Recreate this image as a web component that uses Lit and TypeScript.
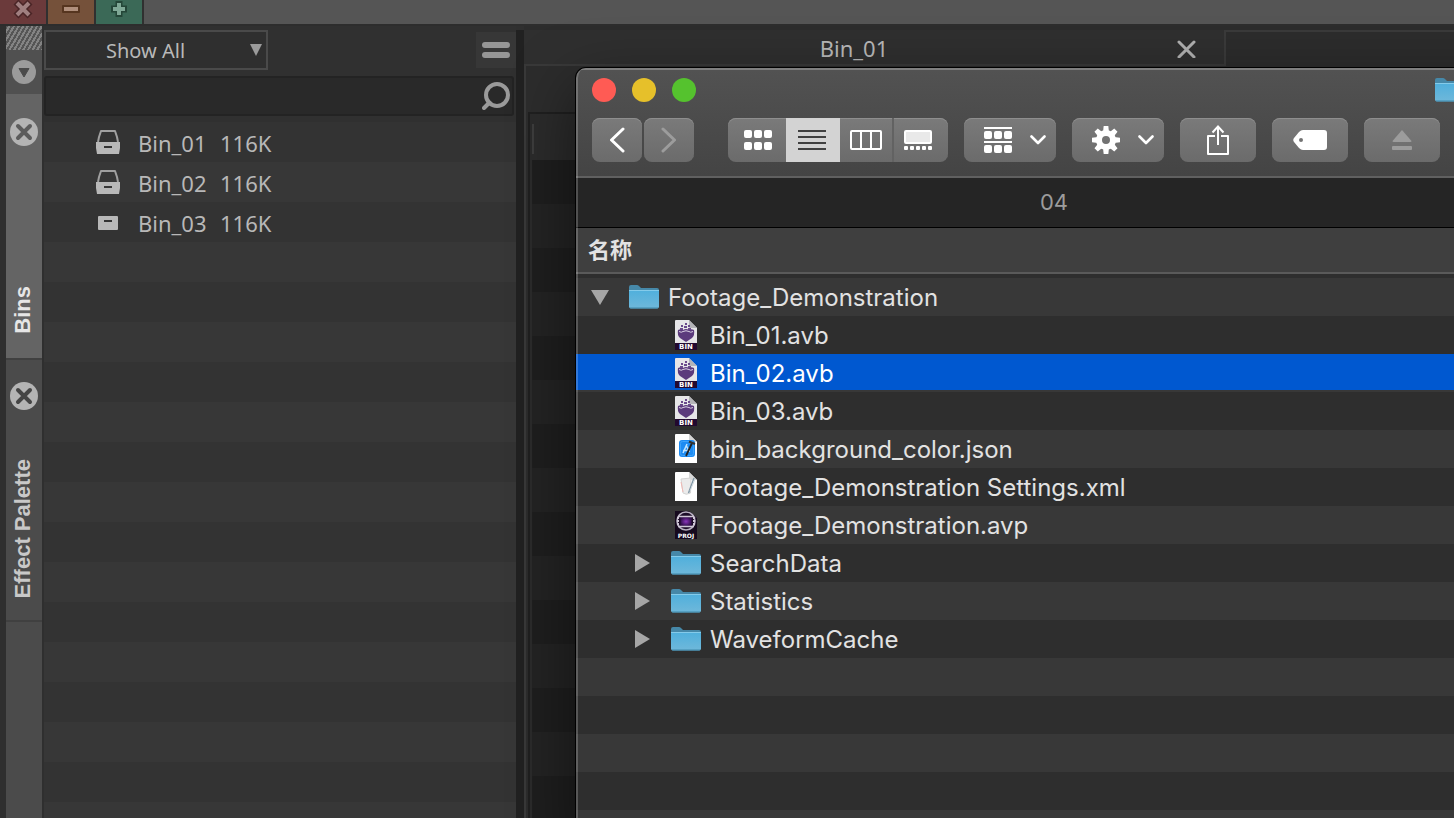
import { LitElement, html, css, svg, nothing } from "lit";
import { customElement, state } from "lit/decorators.js";

const folderIcon = html`<svg class="folder" width="30" height="24" viewBox="0 0 30 24" aria-hidden="true">
  <defs>
    <linearGradient id="fg" x1="0" y1="0" x2="0" y2="1">
      <stop offset="0" stop-color="#4fafdc" />
      <stop offset="1" stop-color="#6fb8da" />
    </linearGradient>
  </defs>
  <path d="M0 2Q0 0 2 0H8Q9 0 10 1L11.500 2.500Q12 3 13 3H28Q30 3 30 5V12H0Z" fill="#4688a8" />
  <path d="M0 5H30V21.500Q30 23.500 28 23.500H2Q0 23.500 0 21.500Z" fill="url(#fg)" />
  <path d="M0 5.500H30" stroke="#84cbea" />
  <path d="M1 23H29" stroke="#3f88aa" />
</svg>`;

const sheet = "M0 1Q0 0 1 0H14L22 8V29H0Z";

const binFileIcon = html`<svg class="file" width="22" height="30" viewBox="0 0 22 30" aria-hidden="true">
  <path d=${sheet} fill="#e6e6e8" />
  <path d="M14 0L22 8H15.500Q14 8 14 6.500Z" fill="#b4b4b8" />
  <path d="M3 10Q6 8.500 8 10Q11 8 14 10Q16 8.500 19 10Q20 15 17 18Q14 20 11 22Q8 20 5 18Q2 15 3 10Z" fill="#5b3a7c" />
  <path d="M4 11.500Q6.500 13 8 11.500Q11 10 14 11.500Q15.500 13 18 11.500" fill="none" stroke="#d9d0e4" stroke-width="1" />
  <g fill="#6a4a8c">
    <rect x="6" y="5" width="2" height="2" /><rect x="10" y="3" width="2" height="2" />
    <rect x="9" y="6" width="3" height="2" /><rect x="13" y="5" width="2" height="2" />
    <rect x="5" y="8" width="3" height="2" /><rect x="13" y="8" width="3" height="2" />
  </g>
  <rect y="23" width="22" height="7" fill="#22092f" />
  <text class="tag" x="11" y="29" text-anchor="middle" font-size="7" fill="#fff">BIN</text>
</svg>`;

const jsonFileIcon = html`<svg class="file" width="22" height="30" viewBox="0 0 22 30" aria-hidden="true">
  <path d=${sheet} fill="#fff" />
  <path d="M14 0L22 8H16Q14 8 14 6Z" fill="#d5d5d5" />
  <rect x="4" y="6" width="16" height="17" rx="3" fill="#1d8bf2" />
  <rect x="5.500" y="7.500" width="13" height="14" rx="2" fill="none" stroke="#3fa3fa" />
  <path d="M8 19L12 10M8 16.500H15M11 11L14.500 18" stroke="#bfe3ff" stroke-width="1.500" fill="none" />
  <path d="M11 22L17 9" stroke="#222" stroke-width="1.800" />
  <path d="M14 7.500L20 10" stroke="#333" stroke-width="2.200" />
</svg>`;

const xmlFileIcon = html`<svg class="file" width="22" height="30" viewBox="0 0 22 30" aria-hidden="true">
  <path d=${sheet} fill="#fff" />
  <path d="M14 0L22 8H16Q14 8 14 6Z" fill="#d8d8d8" />
  <path d="M6 7L16 6L15.500 21Q11 23.500 8 21Z" fill="#ebebeb" stroke="#d4d4d4" />
  <path d="M6 10L8 20" stroke="#f0b9b4" />
  <path d="M19 6L13.500 21" stroke="#7f96a5" stroke-width="1.400" />
  <path d="M20 7L15 19" stroke="#cfd9df" />
</svg>`;

const projFileIcon = html`<svg class="file" width="22" height="30" viewBox="0 0 22 30" aria-hidden="true">
  <defs>
    <radialGradient id="pg"><stop offset="0" stop-color="#8a35bc" /><stop offset="1" stop-color="#34104f" /></radialGradient>
  </defs>
  <path d="M0 1H14L22 8V29H0Z" fill="#160a1e" />
  <path d="M14 1L22 8H16Z" fill="#3b2b48" />
  <circle cx="11" cy="11" r="9" fill="#1c0c28" stroke="#b9b1c2" stroke-width="1.600" />
  <rect x="5.500" y="7" width="11" height="9" rx="1" fill="url(#pg)" />
  <path d="M3 6.500H19M3 16.500H19" stroke="#cfc7d6" stroke-width="1.400" />
  <path d="M3 7V16M19 7V16" stroke="#cfc7d6" stroke-width="2" stroke-dasharray="2 1" />
  <text class="tag" x="11" y="28" text-anchor="middle" font-size="6" fill="#fff">PROJ</text>
</svg>`;

const icons = { folder: folderIcon, bin: binFileIcon, json: jsonFileIcon, xml: xmlFileIcon, proj: projFileIcon };

interface Entry {
  name: string;
  icon: keyof typeof icons;
  level: number;
  open?: boolean;
}

const entries: Entry[] = [
  { name: "Footage_Demonstration", icon: "folder", level: 0, open: true },
  { name: "Bin_01.avb", icon: "bin", level: 1 },
  { name: "Bin_02.avb", icon: "bin", level: 1 },
  { name: "Bin_03.avb", icon: "bin", level: 1 },
  { name: "bin_background_color.json", icon: "json", level: 1 },
  { name: "Footage_Demonstration Settings.xml", icon: "xml", level: 1 },
  { name: "Footage_Demonstration.avp", icon: "proj", level: 1 },
  { name: "SearchData", icon: "folder", level: 1, open: false },
  { name: "Statistics", icon: "folder", level: 1, open: false },
  { name: "WaveformCache", icon: "folder", level: 1, open: false },
];

@customElement("finder-window")
class FinderWindow extends LitElement {
  static styles = css`
    :host {
      display: flex;
      flex-direction: column;
      font-family: Inter, "Noto Sans CJK SC", sans-serif;
      color: #e2e2e2;
      background: #2e2e2e;
      border-radius: 10px 0 0 0;
      overflow: hidden;
    }
    :host::after {
      content: "";
      position: absolute;
      inset: 0;
      border-radius: inherit;
      border-left: 2px solid rgba(255, 255, 255, 0.2);
      pointer-events: none;
    }
    button {
      border: 0;
      margin: 0;
      padding: 0;
      display: flex;
      align-items: center;
      justify-content: center;
      font: inherit;
      color: #fff;
    }
    .chrome {
      background: linear-gradient(#525252, #444);
      border-top: 2px solid #7e7e7e;
      border-bottom: 2px solid #606060;
      padding: 8px 16px 14px;
    }
    .titlebar {
      display: flex;
      align-items: center;
      gap: 16px;
      height: 24px;
      margin-bottom: 16px;
    }
    .light { width: 24px; height: 24px; border-radius: 50%; }
    .red { background: #ff5b54; }
    .yellow { background: #e6c02a; }
    .green { background: #55c22e; }
    .proxy { margin-left: auto; margin-right: 51px; height: 24px; }
    .toolbar { display: flex; gap: 16px; }
    .nav { display: flex; gap: 2px; margin-right: 18px; }
    .btn {
      height: 44px;
      box-sizing: border-box;
      background: linear-gradient(#7a7a7a, #6b6b6b);
      box-shadow: inset 0 1px #8e8e8e;
      border-radius: 8px;
    }
    .step { width: 50px; }
    .single { width: 76px; }
    .menu { width: 92px; gap: 18px; padding-left: 10px; }
    .dim { color: #9c9c9c; }
    .views { display: flex; }
    .views .btn { width: 54px; border-radius: 0; }
    .views .btn:first-child { width: 58px; padding-left: 2px; border-radius: 8px 0 0 8px; }
    .views .btn:nth-child(3) { border-right: 2px solid #626262; }
    .views .btn:last-child { padding-right: 6px; border-radius: 0 8px 8px 0; }
    .views .on { padding-right: 2px; background: #d3d3d3; box-shadow: none; color: #404040; }
    .tabs {
      height: 50px;
      box-sizing: border-box;
      flex: none;
      display: flex;
      align-items: center;
      justify-content: center;
      background: #252525;
      border-bottom: 1px solid #000;
      color: #9c9c9c;
      font-size: 22px;
      line-height: 26px;
      padding-bottom: 2px;
    }
    .files {
      flex: 1;
      min-height: 0;
      overflow: hidden;
    }
    table { width: 100%; border-collapse: collapse; table-layout: fixed; }
    th {
      height: 44px;
      padding: 0 12px;
      text-align: left;
      background: #3f3f3f;
      border-bottom: 2px solid #5a5a5a;
      font-size: 22px;
      line-height: 32px;
      font-weight: 700;
    }
    .sep td { height: 4px; }
    td { padding: 0; height: 38px; }
    tbody tr:nth-child(odd) { background: #383838; }
    .row {
      display: flex;
      align-items: center;
      height: 38px;
      padding-left: 12px;
      font-size: 24px;
      line-height: 32px;
      white-space: nowrap;
    }
    .child { padding-left: 54px; }
    .twist { width: 24px; height: 24px; background: none; margin-right: 17px; color: #a6a6a6; }
    .icon { width: 30px; height: 30px; display: flex; align-items: center; justify-content: center; margin-right: 9px; }
    .label { padding-top: 2px; }
    .selected td { background: linear-gradient(#0058d0 36px, #383838 36px); color: #fff; }
    .tag { font-family: "DejaVu Sans", sans-serif; font-weight: 700; }
  `;

  @state() selected = "Bin_02.avb";

  private chevron = html`<svg width="16" height="10" viewBox="0 0 16 10" aria-hidden="true">
    <path d="M1.500 1.500L8 8L14.500 1.500" fill="none" stroke="currentColor" stroke-width="2.600" stroke-linecap="round" stroke-linejoin="round" />
  </svg>`;

  render() {
    const blanks = Array.from({ length: 10 });
    return html`
      <div class="chrome">
        <div class="titlebar">
          <button class="light red" aria-label="Close"></button>
          <button class="light yellow" aria-label="Minimize"></button>
          <button class="light green" aria-label="Zoom"></button>
          <span class="proxy">${folderIcon}</span>
        </div>
        <div class="toolbar">
          <div class="nav">
            <button class="btn step" aria-label="Back">
              <svg width="16" height="26" viewBox="0 0 16 26"><path d="M14 2L2.500 13L14 24" fill="none" stroke="currentColor" stroke-width="3" stroke-linecap="round" stroke-linejoin="round" /></svg>
            </button>
            <button class="btn step dim" aria-label="Forward">
              <svg width="16" height="26" viewBox="0 0 16 26"><path d="M2 2L13.500 13L2 24" fill="none" stroke="currentColor" stroke-width="3" stroke-linecap="round" stroke-linejoin="round" /></svg>
            </button>
          </div>
          <div class="views">
            <button class="btn" aria-label="Icons">
              <svg width="28" height="20" viewBox="0 0 28 20" fill="currentColor">
                ${[0, 12].map((y) => [0, 10, 20].map((x) => svg`<rect x=${x} y=${y} width="8" height="8" rx="2" />`))}
              </svg>
            </button>
            <button class="btn on" aria-label="List">
              <svg width="28" height="20" viewBox="0 0 28 20"><path d="M0 1H28M0 7H28M0 13H28M0 19H28" stroke="currentColor" stroke-width="2" /></svg>
            </button>
            <button class="btn" aria-label="Columns">
              <svg width="32" height="20" viewBox="0 0 32 20"><rect x="1" y="1" width="30" height="18" rx="1" fill="none" stroke="currentColor" stroke-width="2" /><path d="M11 1V19M21 1V19" stroke="currentColor" stroke-width="2" /></svg>
            </button>
            <button class="btn" aria-label="Gallery">
              <svg width="28" height="20" viewBox="0 0 28 20" fill="currentColor">
                <rect x="1" y="1" width="26" height="12" rx="1" fill="#e9e9e9" stroke="currentColor" stroke-width="2" />
                ${[0, 6, 12, 18, 24].map((x) => svg`<rect x=${x} y="16" width="4" height="4" rx="1" />`)}
              </svg>
            </button>
          </div>
          <button class="btn menu" aria-label="Group">
            <svg width="28" height="26" viewBox="0 0 28 26" fill="currentColor">
              <rect width="28" height="2" /><rect y="14" width="28" height="2" />
              ${[4, 18].map((y) => [0, 10, 20].map((x) => svg`<rect x=${x} y=${y} width="8" height="8" rx="2" />`))}
            </svg>
            ${this.chevron}
          </button>
          <button class="btn menu" aria-label="Action">
            <svg width="28" height="28" viewBox="-14 -14 28 28">
              <circle r="7" fill="none" stroke="currentColor" stroke-width="6" />
              ${[0, 45, 90, 135, 180, 225, 270, 315].map(
                (a) => svg`<path transform="rotate(${a})" d="M-3 -8L-2.300 -14H2.300L3 -8Z" fill="currentColor" />`,
              )}
            </svg>
            ${this.chevron}
          </button>
          <button class="btn single" aria-label="Share">
            <svg width="22" height="32" viewBox="0 0 22 32" fill="none" stroke="currentColor" stroke-width="2">
              <path d="M8 12H1V30H21V12H14" stroke-linejoin="round" /><path d="M11 21V3M5.500 8.500L11 2.500L16.500 8.500" />
            </svg>
          </button>
          <button class="btn single" aria-label="Tags">
            <svg width="34" height="20" viewBox="0 0 34 20"><path fill-rule="evenodd" d="M10 0H31Q34 0 34 3V17Q34 20 31 20H10Q8 20 6 18L1 12Q-.500 10 1 8L6 2Q8 0 10 0ZM8 8A2 2 0 1 0 8 12A2 2 0 1 0 8 8Z" fill="currentColor" /></svg>
          </button>
          <button class="btn single dim" aria-label="Eject">
            <svg width="20" height="20" viewBox="0 0 20 20" fill="currentColor"><path d="M10 0L19.500 11Q19.500 12 18.500 12H1.500Q.500 12 .500 11Z" /><rect y="16" width="20" height="4" rx="1" /></svg>
          </button>
        </div>
      </div>
      <div class="tabs">04</div>
      <div class="files">
        <table>
          <thead>
            <tr><th scope="col">名称</th></tr>
            <tr class="sep"><td></td></tr>
          </thead>
          <tbody>
            ${entries.map(
              (e) => html`<tr class=${e.name === this.selected ? "selected" : ""} @click=${() => (this.selected = e.name)}>
                <td>
                  <div class="row ${e.level ? "child" : ""}">
                    <button class="twist" tabindex=${e.open === undefined ? "-1" : "0"} aria-label=${e.name}>
                      ${e.open === undefined
                        ? nothing
                        : e.open
                          ? html`<svg width="18" height="15" viewBox="0 0 18 15"><path d="M0 0H18L9 15Z" fill="currentColor" /></svg>`
                          : html`<svg width="15" height="18" viewBox="0 0 15 18"><path d="M0 0L15 9L0 18Z" fill="currentColor" /></svg>`}
                    </button>
                    <span class="icon">${icons[e.icon]}</span>
                    <span class="label">${e.name}</span>
                  </div>
                </td>
              </tr>`,
            )}
            ${blanks.map(() => html`<tr><td></td></tr>`)}
          </tbody>
        </table>
      </div>
    `;
  }
}

const openBin = html`<svg width="26" height="24" viewBox="0 0 26 24" aria-hidden="true">
  <path d="M3 12L4 7L6 1H20L22 7L23 12" fill="none" stroke="#a0a0a0" stroke-width="2" stroke-linejoin="round" />
  <path fill-rule="evenodd" d="M1 12H25V18L24 24H2L1 18ZM9 16V18H17V16Z" fill="#b8b8b8" />
</svg>`;
const closedBin = html`<svg width="26" height="24" viewBox="0 0 26 24" aria-hidden="true">
  <path fill-rule="evenodd" d="M4 6H22Q23 6 23 7V19Q23 20 22 20H4Q3 20 3 19V7Q3 6 4 6ZM9 10V12H17V10Z" fill="#b8b8b8" />
</svg>`;

@customElement("app-root")
class AppRoot extends LitElement {
  static styles = css`
    :host {
      display: flex;
      flex-direction: column;
      position: relative;
      height: 100vh;
      overflow: hidden;
      background: #2f2f2f;
      color: #b8b8b8;
      font-family: "Noto Sans", sans-serif;
      font-size: 22px;
      line-height: 30px;
    }
    button { border: 0; margin: 0; padding: 0; background: none; font: inherit; color: inherit; }
    svg { display: block; }
    .top { display: flex; flex: none; height: 24px; background: #555; border-bottom: 2px solid #2d2d2d; }
    .ctl { width: 46px; box-sizing: content-box; border-right: 2px solid #303030; display: flex; justify-content: center; }
    .close { background: #6b3a3b; }
    .min { background: #75513a; }
    .add { background: #3b6957; }
    .main { display: flex; flex: 1; min-height: 0; padding-left: 6px; }
    .rail { width: 36px; flex: none; display: flex; flex-direction: column; background: #4b4b4b; margin-right: 2px; }
    .grip {
      height: 24px;
      background: repeating-linear-gradient(120deg, #555 0 2px, #838383 2px 4px);
    }
    .drop { height: 44px; display: flex; align-items: center; justify-content: center; background: #505050; }
    .tab {
      height: 262px;
      display: flex;
      flex-direction: column;
      align-items: center;
      justify-content: space-between;
      padding: 22px 0;
      box-sizing: border-box;
      border-bottom: 2px solid #404040;
      font: 700 22px/28px "Liberation Sans", sans-serif;
      color: #c8c8c8;
    }
    .active { background: #646464; color: #e6e6e6; height: 266px; padding: 24px 0; }
    .vertical { writing-mode: vertical-rl; transform: rotate(180deg); margin-right: 2px; }
    .bins { width: 472px; flex: none; display: flex; flex-direction: column; background: #303030; }
    .filter { display: flex; justify-content: space-between; padding-top: 4px; }
    .pick { position: relative; width: 224px; height: 40px; }
    select {
      appearance: none;
      width: 100%;
      height: 100%;
      padding: 2px 60px 0;
      border: 2px solid #4a4a4a;
      border-radius: 0;
      background: #2f2f2f;
      color: #b9b9b9;
      font: inherit;
      font-size: 20px;
    }
    .arrow { position: absolute; right: 6px; top: 14px; pointer-events: none; }
    .burger { width: 40px; height: 36px; background: #373737; display: flex; align-items: center; justify-content: center; margin-top: 2px; }
    .search {
      display: flex;
      align-items: center;
      height: 36px;
      margin: 6px 2px 6px 0;
      padding-right: 2px;
      border: 2px solid #232323;
      border-radius: 3px;
      background: #292929;
    }
    input { flex: 1; min-width: 0; border: 0; outline: 0; background: none; color: inherit; font: inherit; }
    .list { flex: 1; min-height: 0; overflow: hidden; background: repeating-linear-gradient(#333 0 40px, #373737 40px 80px); }
    table { border-collapse: collapse; margin-left: 51px; }
    td { box-sizing: border-box; height: 40px; padding: 2px 0 0; }
    .glyph { width: 43px; padding: 0; }
    .name { width: 82px; }
    .divider { width: 8px; flex: none; background: #212121; margin-top: 4px; }
    .editor { flex: 1; min-width: 0; display: flex; flex-direction: column; background: #2c2c2c; }
    .editortabs { display: grid; grid-template-columns: 700px 1fr; height: 36px; margin-top: 4px; flex: none; }
    .etab {
      display: grid;
      grid-template-columns: 1fr 74px;
      align-items: center;
      background: #2f2f2f;
      padding-top: 2px;
      border-bottom: 2px solid #393939;
      box-sizing: border-box;
    }
    .title { text-align: center; padding-left: 34px; line-height: 32px; }
    .other { background: #2c2c2c; border-left: 2px solid #3a3a3a; border-top: 2px solid #3a3a3a; }
    .pane { flex: 1; min-height: 0; border-left: 2px solid #393939; padding: 46px 0 0 2px; display: flex; flex-direction: column; }
    .sheet {
      flex: 1;
      border-left: 2px solid #1f1f1f;
      border-top: 2px solid #1f1f1f;
      display: flex;
      flex-direction: column;
    }
    .head { height: 46px; flex: none; padding: 10px 2px; box-sizing: border-box; background: #2b2b2b; }
    .mark { width: 2px; height: 30px; background: #3d3d3d; }
    .rows {
      flex: 1;
      border-left: 2px solid #2b2b2b;
      background: repeating-linear-gradient(#1e1e1e 0 44px, #232323 44px 88px);
    }
    .window {
      position: absolute;
      left: 576px;
      right: -78px;
      top: 68px;
      bottom: -20px;
      box-shadow: 0 0 0 1px #000, 0 20px 60px rgba(0, 0, 0, 0.5);
    }
  `;

  private bins = [
    { name: "Bin_01", size: "116K", open: true },
    { name: "Bin_02", size: "116K", open: true },
    { name: "Bin_03", size: "116K", open: false },
  ];

  private closeBadge(hole: string) {
    return html`<svg width="28" height="28" viewBox="0 0 28 28" aria-hidden="true">
      <circle cx="14" cy="14" r="14" fill="#b4b4b4" />
      <path d="M8 8L20 20M20 8L8 20" stroke=${hole} stroke-width="4" stroke-linecap="round" />
    </svg>`;
  }

  render() {
    return html`
      <header class="top">
        <button class="ctl close" aria-label="Close">
          <svg width="20" height="19" viewBox="0 0 20 19"><path d="M3 2L17 16M17 2L3 16" stroke="#4a2526" stroke-width="7" /><path d="M4 3L16 15M16 3L4 15" stroke="#a07f80" stroke-width="4" /></svg>
        </button>
        <button class="ctl min" aria-label="Minimize">
          <svg width="20" height="19" viewBox="0 0 20 19"><rect x="1" y="5" width="18" height="8" rx="1" fill="#56351f" /><rect x="3" y="7" width="14" height="4" fill="#b08f7c" /></svg>
        </button>
        <button class="ctl add" aria-label="Expand">
          <svg width="20" height="19" viewBox="0 0 20 19"><path d="M10 1V17M2 9H18" stroke="#244638" stroke-width="7" /><path d="M10 3V15M4 9H16" stroke="#7fa896" stroke-width="4" /></svg>
        </button>
      </header>
      <main class="main">
        <nav class="rail">
          <div class="grip"></div>
          <button class="drop" aria-label="Panel menu">
            <svg width="24" height="24" viewBox="0 0 24 24"><circle cx="12" cy="12" r="12" fill="#9b9b9b" /><path d="M7 8.500H17L12 17Z" fill="#4a4a4a" stroke="#4a4a4a" stroke-linejoin="round" /></svg>
          </button>
          <div class="tab active">
            <button aria-label="Close Bins">${this.closeBadge("#5c5c5c")}</button>
            <button class="vertical">Bins</button>
          </div>
          <div class="tab">
            <button aria-label="Close Effect Palette">${this.closeBadge("#444")}</button>
            <button class="vertical">Effect Palette</button>
          </div>
        </nav>
        <section class="bins">
          <div class="filter">
            <div class="pick">
              <select aria-label="Filter"><option>Show All</option></select>
              <svg class="arrow" width="12" height="12" viewBox="0 0 12 12"><path d="M0 0H12L6 12Z" fill="#9b9b9b" /></svg>
            </div>
            <button class="burger" aria-label="Menu">
              <svg width="28" height="16" viewBox="0 0 28 16" fill="#969696"><rect width="28" height="6" rx="3" /><rect y="10" width="28" height="6" rx="3" /></svg>
            </button>
          </div>
          <label class="search">
            <input type="text" aria-label="Search bins" />
            <svg width="28" height="28" viewBox="0 0 28 28" fill="none" stroke="#9a9a9a"><circle cx="15" cy="13" r="11" stroke-width="4" /><path d="M7.500 20.500L2 26" stroke-width="4" stroke-linecap="round" /></svg>
          </label>
          <div class="list">
            <table>
              ${this.bins.map(
                (b) => html`<tr>
                  <td class="glyph">${b.open ? openBin : closedBin}</td>
                  <td class="name">${b.name}</td>
                  <td>${b.size}</td>
                </tr>`,
              )}
            </table>
          </div>
        </section>
        <div class="divider"></div>
        <section class="editor">
          <div class="editortabs">
            <div class="etab">
              <span class="title">Bin_01</span>
              <button aria-label="Close tab">
                <svg width="74" height="20" viewBox="0 0 74 20"><path d="M29 4L44 19M44 4L29 19" stroke="#b0b0b0" stroke-width="3" stroke-linecap="round" /></svg>
              </button>
            </div>
            <div class="other"></div>
          </div>
          <div class="pane">
            <div class="sheet">
              <div class="head"><div class="mark"></div></div>
              <div class="rows"></div>
            </div>
          </div>
        </section>
      </main>
      <finder-window class="window"></finder-window>
    `;
  }
}
